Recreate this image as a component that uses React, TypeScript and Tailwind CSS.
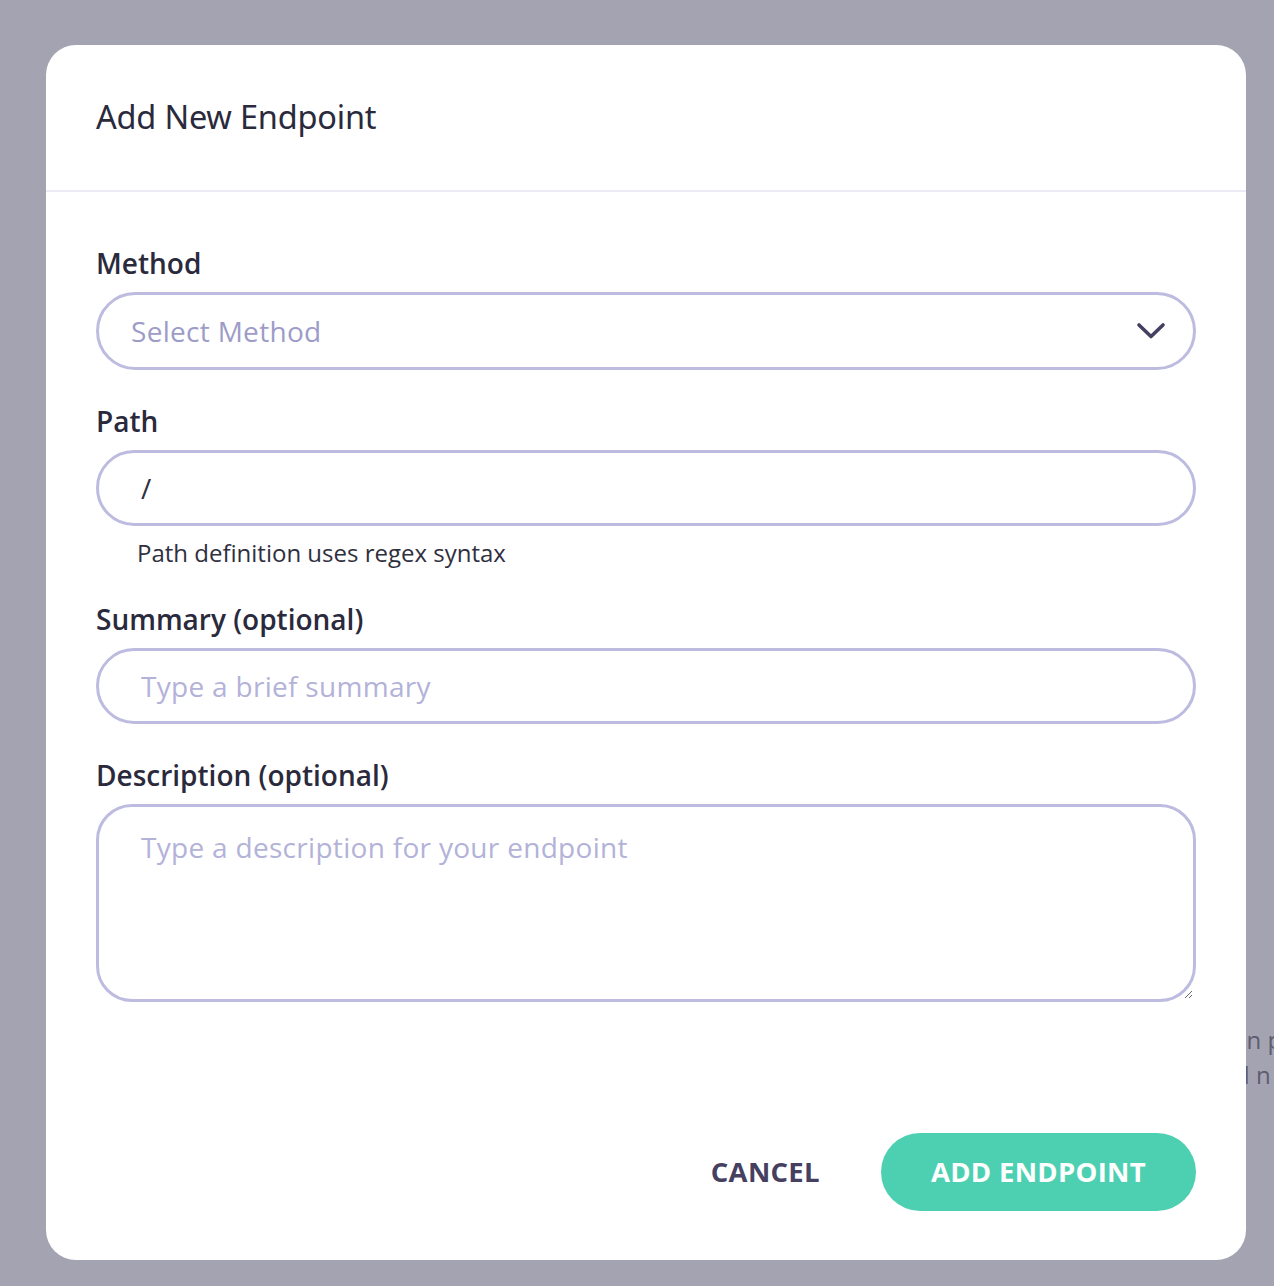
import React, { useState } from 'react';

const labelCls = 'block text-[28px] leading-[36px] font-semibold text-[#2a2a3c]';
const fieldCls =
  'w-full h-[76px] border-[3px] border-[#bdbce0] rounded-full pl-[42px] pr-6 text-[28px] tracking-[0.3px] font-medium text-[#2f2f40] outline-none placeholder:text-[#b3b2d8] bg-white';

const ChevronDown = () => (
  <svg width="30" height="18" viewBox="0 0 30 18" fill="none">
    <path d="M3 3l12 11.5L27 3" stroke="#45405f" strokeWidth="3.6" strokeLinecap="round" strokeLinejoin="round" />
  </svg>
);

const AddEndpointModal: React.FC = () => {
  const [path, setPath] = useState('/');
  const [summary, setSummary] = useState('');
  const [description, setDescription] = useState('');

  return (
    <div className="absolute left-[46px] top-[45px] w-[1200px] bg-white rounded-[30px] flex flex-col">
      <div className="h-[147px] px-[50px] flex items-center border-b-2 border-[#ebebf5]">
        <h2 className="text-[32.5px] text-[#2a2a3c] font-normal font-['Noto_Sans',sans-serif] tracking-[-0.2px]">
          Add New Endpoint
        </h2>
      </div>

      <div className="px-[50px] pt-[53px] pb-[49px] flex flex-col">
        <label className={labelCls}>Method</label>
        <button
          type="button"
          className="mt-[11px] w-full h-[78px] border-[3px] border-[#bdbce0] rounded-full pl-[32px] pr-[27px] flex items-center justify-between text-[28px] tracking-[0.3px] font-medium text-[#9d9cc8] bg-white"
        >
          <span>Select Method</span>
          <ChevronDown />
        </button>

        <label className={`${labelCls} mt-[33px]`}>Path</label>
        <input className={`${fieldCls} mt-[11px]`} value={path} onChange={e => setPath(e.target.value)} />
        <p className="mt-[12px] ml-[41px] text-[24px] leading-[30px] text-[#2f2f40]">Path definition uses regex syntax</p>

        <label className={`${labelCls} mt-[33px]`}>Summary (optional)</label>
        <input
          className={`${fieldCls} mt-[11px]`}
          placeholder="Type a brief summary"
          value={summary}
          onChange={e => setSummary(e.target.value)}
        />

        <label className={`${labelCls} mt-[33px]`}>Description (optional)</label>
        <textarea
          className="mt-[11px] w-full h-[198px] border-[3px] border-[#bdbce0] rounded-[36px] pl-[42px] pr-6 pt-[22px] text-[28px] tracking-[0.3px] font-medium leading-[36px] text-[#2f2f40] outline-none placeholder:text-[#b3b2d8] bg-white"
          placeholder="Type a description for your endpoint"
          value={description}
          onChange={e => setDescription(e.target.value)}
        />

        <div className="mt-[131px] flex items-center justify-end gap-[61px]">
          <button type="button" className="text-[27.5px] font-bold text-[#45405f] tracking-[0.3px]">
            CANCEL
          </button>
          <button
            type="button"
            className="h-[78px] px-[50px] rounded-full bg-[#4dd0b2] text-white text-[27.5px] font-bold tracking-[0.3px]"
          >
            ADD ENDPOINT
          </button>
        </div>
      </div>
    </div>
  );
};

export default function App() {
  return (
    <div className="relative w-[1274px] h-[1286px] overflow-hidden bg-white font-['Open_Sans',sans-serif]">
      {/* page behind the dialog */}
      <div className="pt-[1022px] text-[24px] leading-[35px] text-[#2f2f40]">
        <p className="ml-[1226px] whitespace-nowrap">ion p</p>
        <p className="ml-[1235px] whitespace-nowrap">d n</p>
      </div>
      <div className="absolute inset-0 bg-[#757489]/[0.66]" />
      <AddEndpointModal />
    </div>
  );
}
